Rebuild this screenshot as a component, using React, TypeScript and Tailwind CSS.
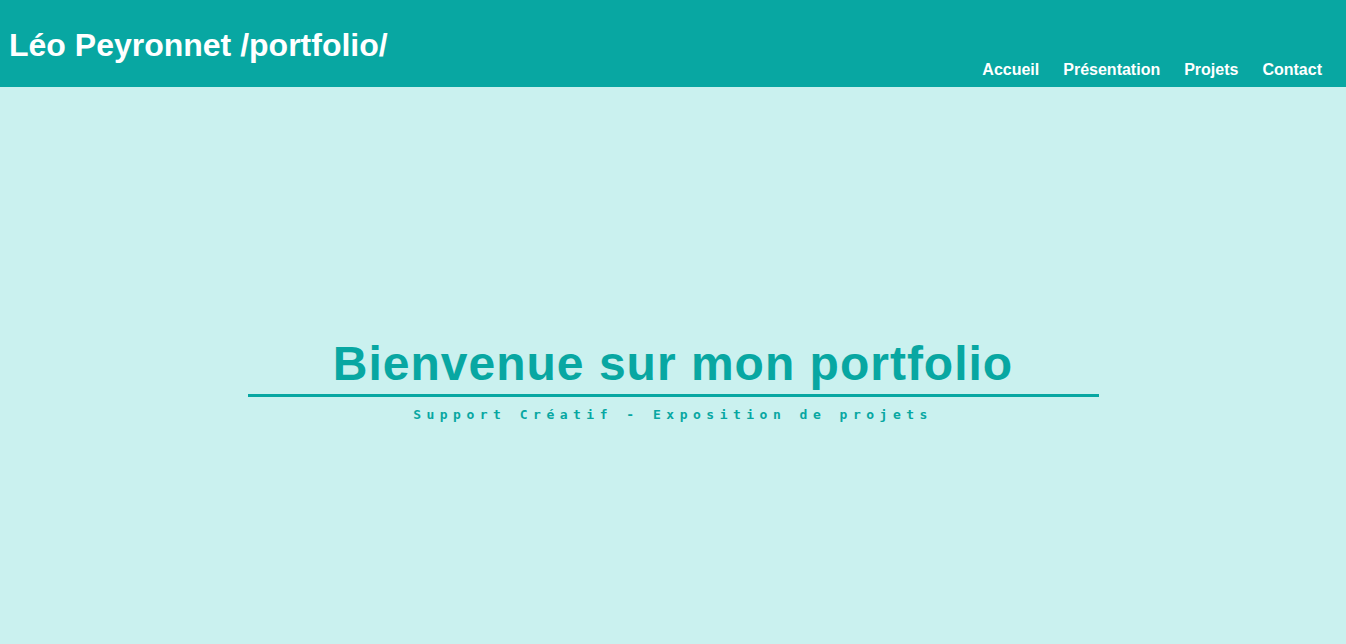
export default function App() {
  const links = ['Accueil', 'Présentation', 'Projets', 'Contact'];

  return (
    <div className="min-h-screen bg-[#caf1ef] font-['Liberation_Sans',Arial,sans-serif]">
      <header className="h-[87px] bg-[#08a7a2] flex justify-between">
        <h1 className="pt-[27px] pl-[9px] text-[32px] leading-[1.15] font-bold text-white">Léo Peyronnet /portfolio/</h1>
        <nav className="self-end pb-[8px] pr-[24px] flex gap-[24px]">
          {links.map((l) => (
            <a key={l} href="#" className="text-[16px] leading-[1.15] font-bold text-white">
              {l}
            </a>
          ))}
        </nav>
      </header>

      <main className="flex flex-col items-center pt-[249px]">
        <h2 className="w-[851px] text-center text-[48px] leading-[1.15] font-bold tracking-[1px] text-[#08a7a2] border-b-[3px] border-[#08a7a2] pb-[3px]">
          Bienvenue sur mon portfolio
        </h2>
        <p className="mt-[10px] text-[13px] leading-[1.17] font-bold tracking-[5.5px] text-[#08a7a2] font-['DejaVu_Sans_Mono',monospace]">
          Support Créatif - Exposition de projets
        </p>
      </main>
    </div>
  );
}
